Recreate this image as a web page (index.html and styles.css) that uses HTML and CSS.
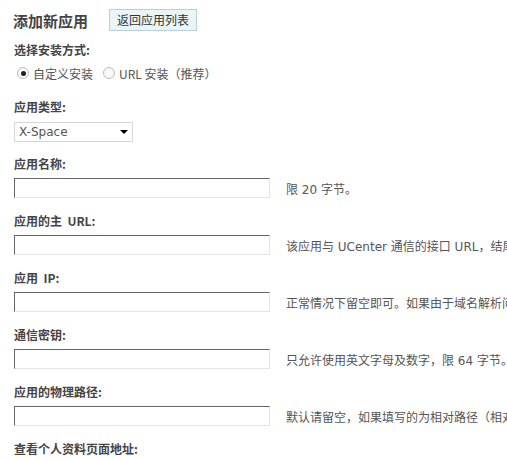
FILE: index.html
```html
<!DOCTYPE html>
<html lang="zh-CN">
<head>
  <meta charset="UTF-8">
  <title>添加新应用</title>
  <link rel="stylesheet" href="styles.css">
</head>
<body>

<div class="container">
  <div class="title-bar">
    <h3>添加新应用</h3>
    <a class="back-btn" href="#">返回应用列表</a>
  </div>

  <form class="app-form">
    <div class="label first">选择安装方式:</div>
    <div class="radios">
      <label class="radio"><input type="radio" name="type" checked> 自定义安装</label>
      <label class="radio"><input type="radio" name="type"> URL 安装（推荐）</label>
    </div>

    <div class="label after-radio">应用类型:</div>
    <div class="select-wrap">
      <select class="select">
        <option>X-Space</option>
      </select>
    </div>

    <div class="label">应用名称:</div>
    <div class="row">
      <input class="txt" type="text">
      <span class="hint">限 20 字节。</span>
    </div>

    <div class="label">应用的主&nbsp; URL:</div>
    <div class="row">
      <input class="txt" type="text">
      <span class="hint">该应用与 UCenter 通信的接口 URL，结尾请不要加“/” ，应用的通知只发送给主 URL 地址</span>
    </div>

    <div class="label">应用&nbsp; IP:</div>
    <div class="row">
      <input class="txt" type="text">
      <span class="hint">正常情况下留空即可。如果由于域名解析问题导致 UCenter 与该应用通信失败，请尝试设置为该应用所在服务器的 IP 地址。</span>
    </div>

    <div class="label">通信密钥:</div>
    <div class="row">
      <input class="txt" type="text">
      <span class="hint">只允许使用英文字母及数字，限 64 字节。应用端的通信密钥必须与此设置保持一致，否则该应用将无法与 UCenter 正常通信。</span>
    </div>

    <div class="label">应用的物理路径:</div>
    <div class="row">
      <input class="txt" type="text">
      <span class="hint">默认请留空，如果填写的为相对路径（相对于 UCenter），程序会自动转换为绝对路径，如 ../</span>
    </div>

    <div class="label">查看个人资料页面地址:</div>
  </form>
</div>

</body>
</html>
```

FILE: styles.css
```css
html, body { margin: 0; overflow: hidden; }
body { font: 12px "DejaVu Sans", "Noto Sans CJK SC", sans-serif; color: #444; background: #fff; }
.container { padding: 9px 0 0 14px; white-space: nowrap; }

.title-bar { display: flex; align-items: center; height: 22px; gap: 21px; }
.title-bar h3 { margin: 0 0 0 -1px; font: bold 15px "Noto Sans CJK SC", sans-serif; color: #444; }
.back-btn { display: inline-block; height: 20px; line-height: 20px; padding: 0 7px; border: 1px solid #b8d0da; background: #ebf5f8; color: #333; text-decoration: none; font-family: "Noto Sans CJK SC", sans-serif; }

.app-form { margin: 0; }
.label { height: 18px; line-height: 18px; margin-top: 14px; font-weight: bold; font-family: "Noto Sans CJK SC", sans-serif; color: #444; }
.label.first { margin-top: 10px; }
.label.after-radio { margin-top: 17px; }

.radios { display: flex; gap: 10px; margin-top: 6px; height: 16px; align-items: center; padding-left: 3px; }
.radio { display: flex; align-items: center; gap: 4px; color: #555; font-family: "Noto Sans CJK SC", sans-serif; }
.radio input { appearance: none; margin: 0; width: 12px; height: 12px; border: 1px solid #bbb; border-radius: 50%; background: #f8f8f8; position: relative; }
.radio input:checked::after { content: ""; position: absolute; left: 2.5px; top: 2.5px; width: 5px; height: 5px; border-radius: 50%; background: #222; }

.select-wrap { position: relative; display: inline-block; margin-top: 6px; margin-bottom: -1px; }
.select { appearance: none; width: 119px; height: 20px; margin: 0; padding: 0 0 0 4px; border: 1px solid #d6d6d6; border-radius: 0; background: #fff; color: #555; font: 12px "DejaVu Sans", sans-serif; }
.select-wrap::after { content: ""; position: absolute; right: 5px; top: 8px; border-left: 4px solid transparent; border-right: 4px solid transparent; border-top: 4px solid #000; pointer-events: none; }

.row { display: flex; align-items: center; gap: 16px; margin-top: 5px; overflow: hidden; }
.txt { flex-shrink: 0; width: 256px; height: 20px; box-sizing: border-box; margin: 0; padding: 0 2px; border: 1px solid #e4e4e4; border-top-color: #666; border-left-color: #666; background: #fff; }
.hint { color: #555; padding-top: 1px; }
```
